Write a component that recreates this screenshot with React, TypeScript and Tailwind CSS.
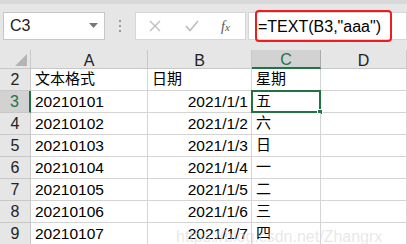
import React from 'react';

const rows = [
  { n: 3, a: '20210101', b: '2021/1/1', c: '五' },
  { n: 4, a: '20210102', b: '2021/1/2', c: '六' },
  { n: 5, a: '20210103', b: '2021/1/3', c: '日' },
  { n: 6, a: '20210104', b: '2021/1/4', c: '一' },
  { n: 7, a: '20210105', b: '2021/1/5', c: '二' },
  { n: 8, a: '20210106', b: '2021/1/6', c: '三' },
  { n: 9, a: '20210107', b: '2021/1/7', c: '四' },
];

const font = { fontFamily: '"Liberation Sans", "Noto Sans CJK SC", sans-serif' };

const cols = 'grid grid-cols-[31px_117px_104px_69px_1fr]';

function ColHead({ label, active }: { label: string; active?: boolean }) {
  return (
    <div
      className={
        active
          ? 'h-[19px] flex items-center justify-center bg-[#d2d2d2] text-[#217346] border-r border-[#ababab] border-b-2 border-b-[#217346] text-[16px]'
          : 'h-[19px] flex items-center justify-center bg-[#e6e6e6] text-[#222] border-r border-b border-[#c8c8c8] text-[16px]'
      }
    >
      <span className="leading-none mt-[3px]">{label}</span>
    </div>
  );
}

function RowHead({ n, active }: { n: number; active?: boolean }) {
  return (
    <div
      className={
        active
          ? 'h-[22px] flex items-center justify-center bg-[#d2d2d2] text-[#217346] border-b border-[#c8c8c8] border-r-2 border-r-[#217346] text-[16px]'
          : 'h-[22px] flex items-center justify-center bg-[#e6e6e6] text-[#222] border-b border-r border-[#c8c8c8] text-[16px]'
      }
    >
      {n}
    </div>
  );
}

function Cell({ children, right, cjk }: { children?: React.ReactNode; right?: boolean; cjk?: boolean }) {
  return (
    <div
      className={`h-[22px] flex items-center border-r border-b border-[#d4d4d4] bg-white text-black ${
        right ? 'justify-end pr-[3px]' : 'pl-[4px]'
      } ${cjk ? 'text-[15px]' : 'text-[15.5px]'}`}
    >
      {children}
    </div>
  );
}

export default function App() {
  return (
    <div className="relative w-[407px] h-[244px] overflow-hidden bg-white" style={font}>
      {/* formula bar */}
      <div className="h-[50px] bg-[#e6e6e6] border-t-[4px] border-[#d8d8d8] flex items-start pt-[8px] pl-[3px]">
        <div className="w-[102px] h-[28px] bg-white border border-[#c6c6c6] flex items-center pl-[6px] pr-[6px] text-[16px] text-[#222]">
          <span className="flex-1">C3</span>
          <svg width="9" height="6" viewBox="0 0 9 6">
            <path d="M0 0 L9 0 L4.5 5 Z" fill="#777" />
          </svg>
        </div>
        <div className="w-[30px] h-[28px] flex flex-col items-center justify-center gap-[3px]">
          <span className="w-[2px] h-[2px] bg-[#999]" />
          <span className="w-[2px] h-[2px] bg-[#999]" />
          <span className="w-[2px] h-[2px] bg-[#999]" />
        </div>
        <div className="w-[111px] h-[28px] bg-white border border-[#d6d6d6] flex items-center">
          <svg className="ml-[13px]" width="12" height="12" viewBox="0 0 12 12">
            <path d="M1 1 L11 11 M11 1 L1 11" stroke="#bdbdbd" strokeWidth="1.4" />
          </svg>
          <svg className="ml-[24px]" width="14" height="12" viewBox="0 0 14 12">
            <path d="M1 6 L5 10.5 L13 1" stroke="#bdbdbd" strokeWidth="1.6" fill="none" />
          </svg>
          <span className="ml-[22px] text-[14px] italic text-[#555]" style={{ fontFamily: '"Liberation Serif", serif' }}>
            f<span className="text-[11px]">x</span>
          </span>
        </div>
        <div className="ml-[2px] flex-1 h-[28px] bg-white border border-[#d6d6d6] flex items-center relative">
          <div className="absolute left-[6px] top-[-3px] w-[137px] h-[32px] border-[2.5px] border-[#f01c1c] rounded-[4px]" />
          <span className="ml-[9px] mt-[1px] text-[16px] text-black">=TEXT(B3,"aaa")</span>
        </div>
      </div>

      {/* grid */}
      <div className={cols}>
        <div className="h-[19px] bg-[#e6e6e6] border-r border-b border-[#c8c8c8] flex items-end justify-end pr-[3px] pb-[2px]">
          <svg width="12" height="12" viewBox="0 0 12 12">
            <path d="M12 0 L12 12 L0 12 Z" fill="#b4b4b4" />
          </svg>
        </div>
        <ColHead label="A" />
        <ColHead label="B" />
        <ColHead label="C" active />
        <ColHead label="D" />

        <RowHead n={2} />
        <Cell cjk>文本格式</Cell>
        <Cell cjk>日期</Cell>
        <Cell cjk>星期</Cell>
        <Cell />

        {rows.map((r) => (
          <React.Fragment key={r.n}>
            <RowHead n={r.n} active={r.n === 3} />
            <Cell>{r.a}</Cell>
            <Cell right>{r.b}</Cell>
            <div className="relative">
              <Cell cjk>{r.c}</Cell>
              {r.n === 3 && (
                <div className="absolute left-[-1px] top-[-1px] right-0 bottom-0 border-2 border-[#217346]">
                  <div className="absolute right-[-4px] bottom-[-4px] w-[6px] h-[6px] bg-[#217346] border border-white" />
                </div>
              )}
            </div>
            <Cell />
          </React.Fragment>
        ))}
      </div>

      {/* watermark */}
      <div className="absolute left-[176px] top-[225px] whitespace-nowrap text-[16px] text-[#d8d8d8]/60 pointer-events-none">
        https://blog.csdn.net/Zhangrx_
      </div>
    </div>
  );
}
